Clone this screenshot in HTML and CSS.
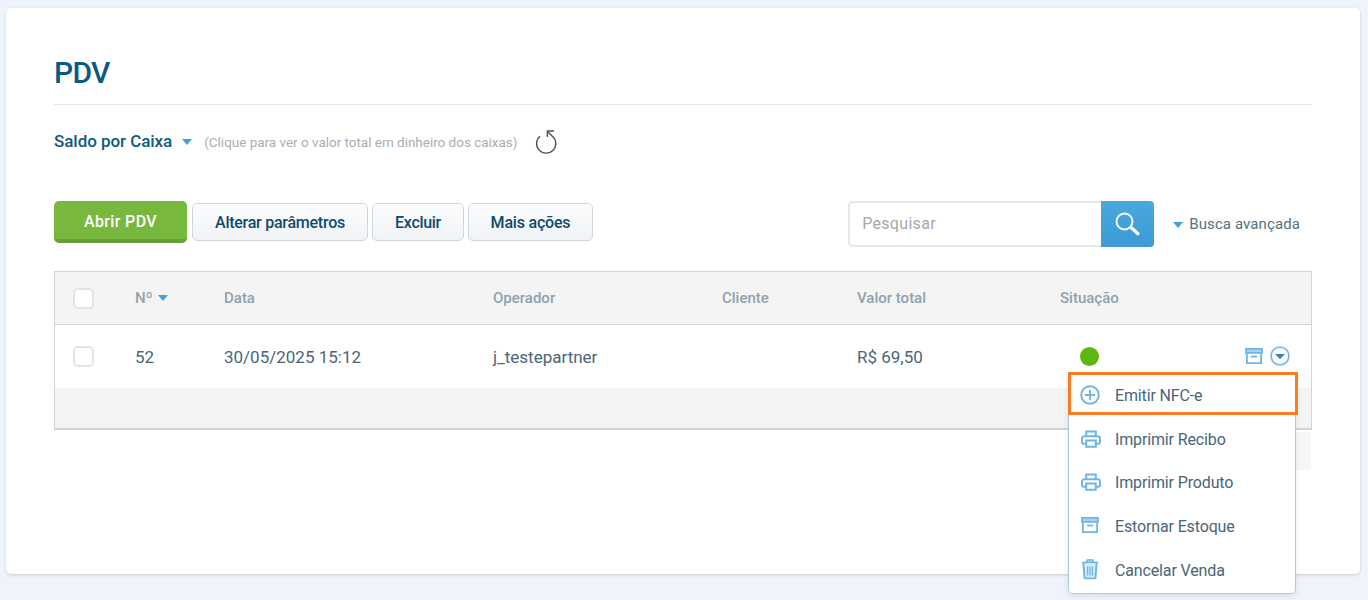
FILE: index.html
```html
<!DOCTYPE html>
<html lang="pt-BR">
<head>
<meta charset="utf-8">
<title>PDV</title>
<link rel="stylesheet" href="styles.css">
</head>
<body>
<svg class="defs" width="0" height="0" aria-hidden="true">
  <defs>
    <symbol id="i-archive" viewBox="0 0 20 18">
      <path d="M1 1h18v4.6H1z" fill="#a9d3ef" stroke="currentColor" stroke-width="2"/>
      <path d="M2 6v11h16V6" fill="none" stroke="currentColor" stroke-width="2"/>
      <path d="M6.5 9.6h7" fill="none" stroke="currentColor" stroke-width="2"/>
    </symbol>
    <symbol id="i-print" viewBox="0 0 20 18">
      <path d="M5.2 6.5V1.4h9.6V6.5" fill="none" stroke="currentColor" stroke-width="2"/>
      <path d="M5 13.8H2.8A1.8 1.8 0 0 1 1 12V8.6a2.4 2.4 0 0 1 2.4-2.4h13.2A2.4 2.4 0 0 1 19 8.6V12a1.8 1.8 0 0 1-1.8 1.8H15" fill="none" stroke="currentColor" stroke-width="2"/>
      <path d="M5.2 10.6h9.6v6.2H5.2z" fill="none" stroke="currentColor" stroke-width="2"/>
    </symbol>
    <symbol id="i-trash" viewBox="0 0 18 21">
      <path d="M1 4.6 C4 3.4 14 3.4 17 4.6" fill="none" stroke="currentColor" stroke-width="2"/>
      <path d="M6 3.6V1.5h6v2.1" fill="none" stroke="currentColor" stroke-width="1.6"/>
      <path d="M2.4 5l1.1 14a1 1 0 0 0 1 1h9a1 1 0 0 0 1-1l1.1-14" fill="#d8ebf8" stroke="currentColor" stroke-width="2"/>
      <path d="M6.6 8v9M9 8v9M11.4 8v9" fill="none" stroke="currentColor" stroke-width="1.3"/>
    </symbol>
  </defs>
</svg>
<main class="card">
  <h1 class="title">PDV</h1>
  <div class="saldo">
    <span class="saldo-label">Saldo por Caixa</span>
    <span class="caret saldo-caret"></span>
    <span class="saldo-hint">(Clique para ver o valor total em dinheiro dos caixas)</span>
    <svg class="refresh" width="22" height="26" viewBox="0 0 22 26"><path d="M5 8.2A9.6 9.6 0 1 0 17.4 8.2L12.4 3.4" fill="none" stroke="#46545f" stroke-width="1.4"/><path d="M12.4 9V3H19" fill="none" stroke="#46545f" stroke-width="1.4"/></svg>
  </div>
  <div class="toolbar">
    <div class="actions">
      <button class="btn btn-primary">Abrir PDV</button>
      <button class="btn btn-w1">Alterar parâmetros</button>
      <button class="btn btn-w2">Excluir</button>
      <button class="btn btn-w3">Mais ações</button>
    </div>
    <div class="search">
      <div class="search-input">Pesquisar</div>
      <button class="search-btn" aria-label="Pesquisar">
        <svg width="26" height="26" viewBox="0 0 26 26"><circle cx="9.5" cy="10.5" r="8" fill="none" stroke="#fff" stroke-width="1.9"/><path d="M16 16.5l7 6.3" fill="none" stroke="#fff" stroke-width="3.2" stroke-linecap="round"/></svg>
      </button>
      <span class="caret adv-caret"></span>
      <span class="adv">Busca avançada</span>
    </div>
  </div>
  <div class="table">
    <div class="row head">
      <span><span class="check"></span></span>
      <span class="sort">Nº <span class="caret sort-caret"></span></span>
      <span>Data</span>
      <span>Operador</span>
      <span>Cliente</span>
      <span>Valor total</span>
      <span>Situação</span>
    </div>
    <div class="row body-row">
      <span><span class="check"></span></span>
      <span>52</span>
      <span>30/05/2025 15:12</span>
      <span>j_testepartner</span>
      <span></span>
      <span>R$ 69,50</span>
      <span class="status"><span class="dot"></span></span>
      <span class="row-icons">
        <svg class="ic-blue" width="18" height="16"><use href="#i-archive"/></svg>
        <svg width="20" height="20" viewBox="0 0 20 20"><circle cx="10" cy="10" r="8.9" fill="none" stroke="#76bbe8" stroke-width="1.7"/><path d="M5 8h10l-5 5.2z" fill="#2f86c5"/></svg>
      </span>
    </div>
    <div class="table-foot"></div>
  </div>
</main>
<div class="strip"></div>
<nav class="menu">
  <a class="item item-active">
    <svg class="ic-blue" width="20" height="20" viewBox="0 0 20 20"><circle cx="10" cy="10" r="8.8" fill="none" stroke="currentColor" stroke-width="1.9"/><path d="M10 5v10M5 10h10" fill="none" stroke="currentColor" stroke-width="1.9"/></svg>
    Emitir NFC-e
  </a>
  <a class="item item-second"><svg class="ic-blue" width="20" height="18"><use href="#i-print"/></svg>Imprimir Recibo</a>
  <a class="item"><svg class="ic-blue" width="20" height="18"><use href="#i-print"/></svg>Imprimir Produto</a>
  <a class="item"><svg class="ic-blue" width="18" height="16"><use href="#i-archive"/></svg>Estornar Estoque</a>
  <a class="item"><svg class="ic-blue" width="18" height="21"><use href="#i-trash"/></svg>Cancelar Venda</a>
</nav>
</body>
</html>
```
FILE: styles.css
```css
* { box-sizing: border-box; }
html, body { height: 600px; overflow: hidden; }
body {
  margin: 0;
  padding: 8px 8px 0 6px;
  background: #eff3fb;
  font-family: Roboto, "Liberation Sans", sans-serif;
  color: #4a6578;
}
.defs { position: absolute; }
.card {
  height: 566px;
  padding: 0 48px;
  background: #fff;
  border-radius: 5px;
  box-shadow: 0 1px 3px rgba(60, 70, 90, .22);
}
.title {
  margin: 0;
  padding-top: 47px;
  height: 97px;
  border-bottom: 1px solid #e3e7ea;
  font-size: 30px;
  line-height: 36px;
  font-weight: 500;
  letter-spacing: -.7px;
  color: #0d5a80;
}
.saldo {
  display: flex;
  align-items: center;
  height: 24px;
  margin-top: 24px;
}
.saldo-label { font-size: 17px; letter-spacing: -.05px; font-weight: 500; color: #0d5a80; }
.caret {
  display: inline-block;
  width: 0;
  height: 0;
  border-left: 5px solid transparent;
  border-right: 5px solid transparent;
  border-top: 6px solid #45a0dc;
}
.saldo-caret { margin: 2px 0 0 10px; }
.saldo-hint { margin: 2px 0 0 12px; font-size: 13.5px; letter-spacing: -.02px; color: #a9aeb3; }
.refresh { margin-left: 18px; flex: none; }
.toolbar {
  display: flex;
  justify-content: space-between;
  align-items: flex-start;
  height: 46px;
  margin-top: 48px;
}
.actions { display: flex; align-items: flex-start; gap: 4px; }
.btn {
  height: 38px;
  margin-top: 2px;
  padding: 0;
  border: 1px solid #ced6dd;
  border-radius: 5px;
  background: linear-gradient(#fbfcfd, #f0f3f6);
  font: 500 16px Roboto, sans-serif;
  color: #0d4a6e;
}
.btn-primary {
  width: 133px;
  height: 42px;
  margin-top: 0;
  margin-right: 1px;
  padding-top: 2px;
  border: 0;
  border-bottom: 4px solid #659f35;
  background: #79b83e;
  letter-spacing: .35px;
  color: #fff;
}
.btn-w1 { width: 176px; letter-spacing: -.25px; }
.btn-w2 { width: 92px; letter-spacing: -.3px; }
.btn-w3 { width: 125px; letter-spacing: -.2px; }
.search { display: flex; align-items: center; margin-right: 12px; }
.search-input {
  display: flex;
  align-items: center;
  width: 253px;
  height: 46px;
  padding: 0 0 2px 12px;
  border: 2px solid #e3e8ec;
  border-right: 0;
  border-radius: 5px 0 0 5px;
  font-size: 16px;
  letter-spacing: .3px;
  color: #a3a9ae;
}
.search-btn {
  display: flex;
  align-items: center;
  justify-content: center;
  width: 53px;
  height: 46px;
  padding: 0;
  border: 0;
  border-radius: 0 4px 4px 0;
  background: linear-gradient(#4aa8de, #3c9ad5);
}
.adv-caret { margin: 2px 0 0 19px; }
.adv { margin-left: 6px; font-size: 15px; letter-spacing: .1px; color: #54717f; }
.table {
  margin-top: 24px;
  border: 1px solid #d2d4d6;
  border-bottom-width: 2px;
}
.row {
  display: grid;
  grid-template-columns: 62px 89px 269px 229px 135px 203px 1fr;
  align-items: center;
  padding-left: 18px;
}
.head {
  height: 53px;
  background: #f4f4f4;
  border-bottom: 1px solid #d2d4d6;
  font-size: 15px;
  font-weight: 500;
  color: #8fa2b0;
}
.body-row {
  grid-template-columns: 62px 89px 269px 229px 135px 203px 185px 1fr;
  height: 63px;
  font-size: 17px;
  padding-top: 1px;
  color: #4a6578;
}
.table-foot { height: 40px; background: #f4f4f4; }
.check {
  display: block;
  width: 21px;
  height: 21px;
  background: #fff;
  border: 2px solid #e2e4e6;
  border-radius: 5px;
}
.body-row .check { margin-top: -1px; }
.sort-caret { margin: 0 0 2px 2px; }
.status { padding-left: 20px; display: flex; }
.dot { width: 19px; height: 19px; border-radius: 50%; background: #5cb811; margin-top: -2px; }
.row-icons { display: flex; align-items: center; gap: 7px; margin-top: -3px; }
.ic-blue { color: #6fb6e6; flex: none; }
.strip {
  position: absolute;
  left: 1296px;
  top: 432px;
  width: 15px;
  height: 38px;
  background: #f7f7f7;
}
.menu {
  position: absolute;
  left: 1068px;
  top: 372px;
  width: 228px;
  height: 222px;
  background: #fff;
  border: 1px solid #a9cbe0;
  border-top: 0;
  border-radius: 0 0 5px 5px;
  box-shadow: 0 2px 6px rgba(60, 70, 90, .12);
}
.item {
  position: relative;
  display: flex;
  align-items: center;
  height: 43.8px;
  padding: 2px 0 0 46px;
  font-size: 16px;
  letter-spacing: -.14px;
  color: #4a6578;
}
.item svg { position: absolute; left: 12px; top: 50%; transform: translateY(-50%); }
.item-second { padding-top: 4px; }
.item-second svg { top: calc(50% + 1px); }
.item-active {
  left: -1px;
  width: 230px;
  height: 43px;
  padding: 4px 0 0 44px;
  border: 3px solid #fb7a24;
  margin-bottom: 1px;
}
.item-active svg { left: 9px; top: calc(50% + 1px); }
```
